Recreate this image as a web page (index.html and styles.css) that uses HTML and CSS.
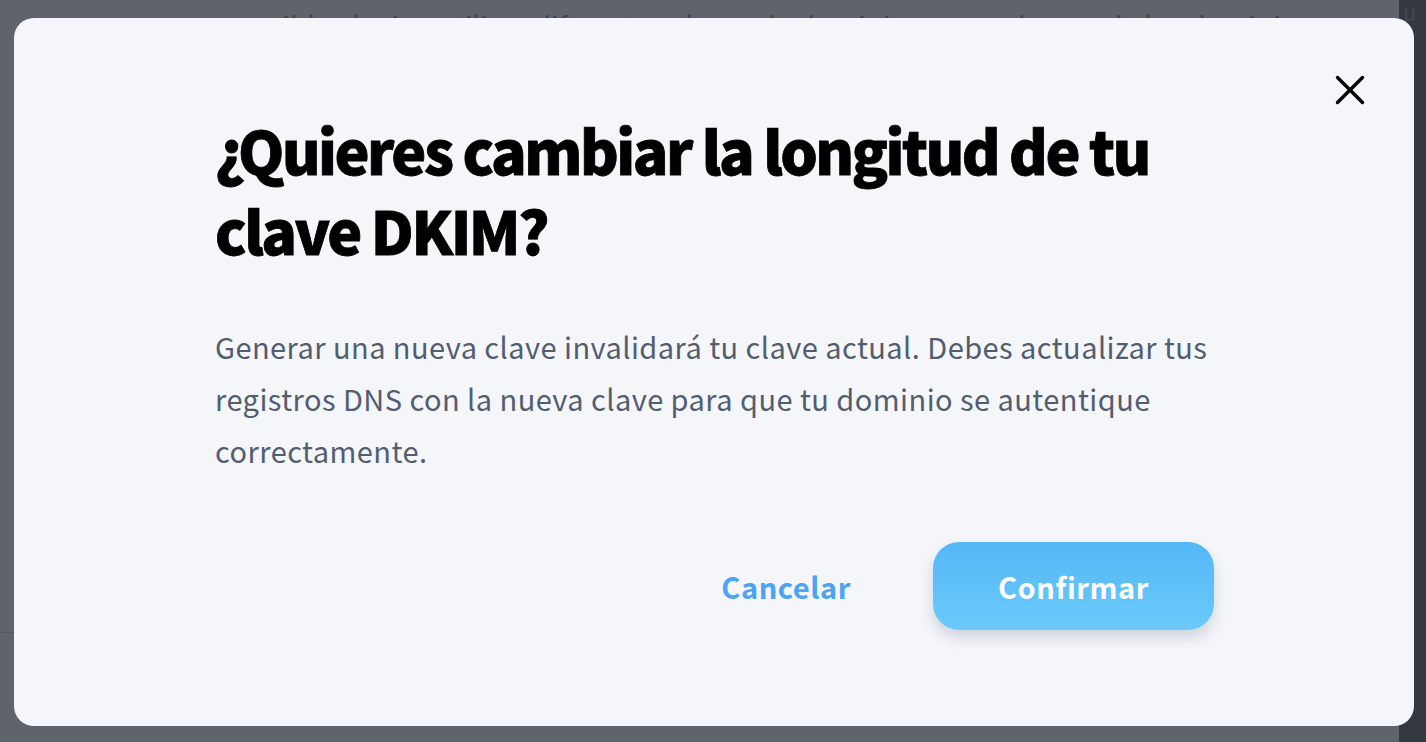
FILE: index.html
```html
<!DOCTYPE html>
<html lang="es">
<head>
    <meta charset="utf-8">
    <meta name="viewport" content="width=device-width, initial-scale=1.0">
    <title>Clave DKIM</title>
    <link rel="stylesheet" href="styles.css">
</head>
<body>
    <div class="page">
        <div class="page-main">
            <p class="page-text">es posible elegir y utilizar diferentes claves de dominio para cada uno de los dominios</p>
            <div class="page-rule"></div>
        </div>
        <div class="page-side"><span>u</span></div>
    </div>

    <div class="overlay">
        <div class="modal">
            <button class="modal-close" aria-label="Cerrar">
                <svg width="30" height="30" viewBox="0 0 30 30">
                    <path d="M2.5 2.5 L27.5 27.5 M27.5 2.5 L2.5 27.5" stroke="#000" stroke-width="3.4" stroke-linecap="round" fill="none"/>
                </svg>
            </button>
            <h2 class="modal-title">¿Quieres cambiar la longitud de tu clave DKIM?</h2>
            <p class="modal-text">Generar una nueva clave invalidará tu clave actual. Debes actualizar tus registros DNS con la nueva clave para que tu dominio se autentique correctamente.</p>
            <div class="modal-actions">
                <button class="btn-link">Cancelar</button>
                <button class="btn-primary">Confirmar</button>
            </div>
        </div>
    </div>
</body>
</html>
```

FILE: styles.css
```css
body {
    margin: 0;
    padding: 0;
    font-family: "Noto Sans CJK SC", "Source Sans Pro", "Open Sans", sans-serif;
    background-color: #5f636b;
    overflow: hidden;
}

.page {
    display: flex;
    height: 742px;
}

.page-main {
    flex: 1;
}

.page-text {
    margin: 0;
    padding: 0 0 0 200px;
    font-size: 28px;
    line-height: 50px;
    color: #3f434b;
    white-space: nowrap;
    overflow: hidden;
}

.page-rule {
    margin-top: 582px;
    height: 1px;
    background-color: #535760;
}

.page-side {
    width: 23px;
    background-color: #343841;
    color: #454952;
    font-size: 22px;
    line-height: 22px;
    padding-left: 4px;
}

.overlay {
    position: fixed;
    top: 0;
    left: 0;
    right: 0;
    bottom: 0;
    padding: 18px 12px 0 14px;
}

.modal {
    position: relative;
    box-sizing: border-box;
    width: 1400px;
    height: 708px;
    padding: 92px 200px 0 201px;
    background-color: #f5f6fa;
    border-radius: 20px;
}

.modal-close {
    position: absolute;
    top: 57px;
    right: 49px;
    padding: 0;
    border: none;
    background: none;
    cursor: pointer;
    line-height: 0;
}

.modal-title {
    margin: 0;
    font-size: 59px;
    font-weight: 900;
    line-height: 80px;
    color: #000;
    letter-spacing: -2.5px;
    -webkit-text-stroke: 0.8px #000;
}

.modal-text {
    margin: 50px 0 0;
    font-size: 29px;
    line-height: 52px;
    letter-spacing: 0.45px;
    color: #535d70;
}

.modal-actions {
    display: flex;
    justify-content: flex-end;
    align-items: center;
    gap: 82px;
    margin-top: 66px;
}

.btn-link {
    padding: 0;
    border: none;
    background: none;
    font-family: inherit;
    font-size: 29px;
    font-weight: 700;
    color: #4aa3f4;
    letter-spacing: 0.6px;
    cursor: pointer;
}

.btn-primary {
    width: 281px;
    height: 88px;
    border: none;
    border-radius: 26px;
    background: linear-gradient(#54b7f6, #6ccafa);
    box-shadow: 0 8px 14px rgba(40, 60, 90, 0.18);
    font-family: inherit;
    font-size: 29px;
    font-weight: 700;
    color: #fff;
    letter-spacing: 0.6px;
    cursor: pointer;
}
```
